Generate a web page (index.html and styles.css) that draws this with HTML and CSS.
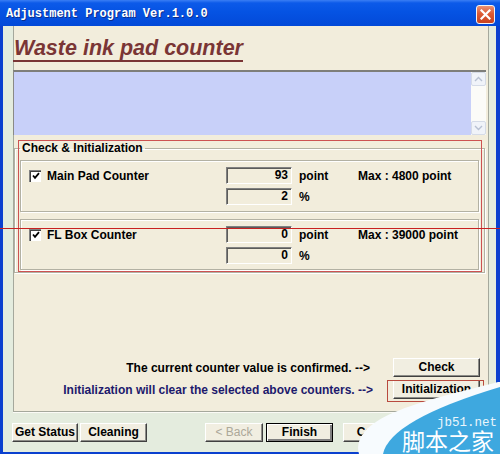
FILE: index.html
```html
<!DOCTYPE html>
<html>
<head>
<meta charset="utf-8">
<link rel="stylesheet" href="styles.css">
</head>
<body>
<div class="window">
  <div class="titlebar">
    <span class="title">Adjustment Program Ver.1.0.0</span>
    <span class="close"><svg width="11" height="11" viewBox="0 0 11 11"><path d="M1.5 1.5 L9.5 9.5 M9.5 1.5 L1.5 9.5" stroke="#fff" stroke-width="2.2" stroke-linecap="square"/></svg></span>
  </div>
  <div class="client">
    <div class="panel">
      <div class="header"><span class="heading">Waste ink pad counter</span></div>
      <div class="memo">
        <div class="memo-area"></div>
        <div class="scrollbar">
          <span class="sb-btn"><svg width="9" height="6" viewBox="0 0 9 6"><path d="M1 5 L4.5 1.5 L8 5" fill="none" stroke="#b7c0d2" stroke-width="1.4"/></svg></span>
          <span class="sb-btn"><svg width="9" height="6" viewBox="0 0 9 6"><path d="M1 1 L4.5 4.5 L8 1" fill="none" stroke="#b7c0d2" stroke-width="1.4"/></svg></span>
        </div>
      </div>
      <fieldset class="group">
        <legend class="legend">Check &amp; Initialization</legend>
        <div class="sub">
          <div class="row">
            <div class="lead"><span class="check"><svg width="8" height="8" viewBox="0 0 8 8"><path d="M1 3.5 L3 5.8 L7 1.2" fill="none" stroke="#000" stroke-width="1.8"/></svg></span><span>Main Pad Counter</span></div>
            <span class="field">93</span><span class="unit">point</span><span>Max : 4800 point</span>
          </div>
          <div class="row">
            <div class="lead"></div>
            <span class="field">2</span><span class="unit">%</span>
          </div>
        </div>
        <div class="sub sub2">
          <div class="row">
            <div class="lead"><span class="check"><svg width="8" height="8" viewBox="0 0 8 8"><path d="M1 3.5 L3 5.8 L7 1.2" fill="none" stroke="#000" stroke-width="1.8"/></svg></span><span>FL Box Counter</span></div>
            <span class="field">0</span><span class="unit">point</span><span>Max : 39000 point</span>
          </div>
          <div class="row">
            <div class="lead"></div>
            <span class="field">0</span><span class="unit">%</span>
          </div>
        </div>
      </fieldset>
      <div class="actions">
        <div class="action-row">
          <span class="note">The current counter value is confirmed. --&gt;</span>
          <button class="btn btn-action">Check</button>
        </div>
        <div class="action-row">
          <span class="note note-blue">Initialization will clear the selected above counters. --&gt;</span>
          <button class="btn btn-action">Initialization</button>
        </div>
      </div>
    </div>
    <div class="footer">
      <button class="btn b-status">Get Status</button>
      <button class="btn b-clean">Cleaning</button>
      <button class="btn b-back" disabled>&lt; Back</button>
      <button class="btn b-finish">Finish</button>
      <button class="btn b-cancel">Cancel</button>
    </div>
  </div>

  <div class="mark mark-group"></div>
  <div class="mark mark-init"></div>
  <div class="mark-line"></div>

  <div class="watermark">
    <svg width="160" height="84" viewBox="0 0 160 84">
      <path d="M19 84 C10 45 90 30 158 12 L160 12 L160 84 Z" fill="#f7fbfe"/>
      <path d="M43 84 Q50 50 160 17 L160 84 Z" fill="#3ea8df"/>
    </svg>
    <span class="wm-url">jb51.net</span>
    <span class="wm-cn">脚本之家</span>
  </div>
</div>
</body>
</html>
```
FILE: styles.css
```css
* { box-sizing: border-box; }
html, body { margin: 0; padding: 0; }
body {
  width: 500px;
  height: 454px;
  overflow: hidden;
  font-family: "Liberation Sans", Arial, sans-serif;
  font-size: 12px;
  font-weight: bold;
  color: #000;
}
.window {
  position: relative;
  width: 500px;
  height: 454px;
  background: #0a40cf;
  display: flex;
  flex-direction: column;
  overflow: hidden;
}
.titlebar {
  height: 26px;
  flex: none;
  display: flex;
  align-items: flex-start;
  justify-content: space-between;
  padding: 0 5px 0 6px;
  background: linear-gradient(#3a7ef4 0, #0c5ae9 3px, #0553e3 45%, #0349d8 100%);
}
.title {
  margin-top: 7px;
  font: bold 12px/14px "Liberation Mono", "DejaVu Sans Mono", monospace;
  color: #fff;
  text-shadow: 1px 1px 0 #0b2e8c;
}
.close {
  margin-top: 5px;
  width: 19px;
  height: 19px;
  border: 1px solid #f4f4f4;
  border-radius: 3px;
  background: linear-gradient(#eb9274, #dc5a34 45%, #c9431f);
  display: flex;
  align-items: center;
  justify-content: center;
}
.client {
  flex: none;
  height: 426px;
  margin: 0 4px 0 3px;
  background: #e4ecde;
  display: flex;
  flex-direction: column;
}
.panel {
  flex: none;
  margin-left: 10px;
  width: 476px;
  height: 386px;
  background: #f2eddc;
  border-left: 1px solid #a5a89c;
  border-right: 1px solid #a5a89c;
  border-bottom: 1px solid #a5a89c;
  box-shadow: 0 1px 0 #fbfbf6;
}
.header {
  height: 44px;
  padding-top: 11px;
}
.heading {
  display: inline-block;
  margin-left: -1px;
  padding-left: 1px;
  padding-bottom: 1px;
  font: italic bold 21.5px/22px "Liberation Sans", Arial, sans-serif;
  color: #7a3535;
  border-bottom: 2px solid #7a3535;
}
.memo {
  display: flex;
  margin-left: -1px;
  width: 473px;
  height: 65px;
  border-top: 2px solid #7e7e7a;
  border-left: 1px solid #8a8a86;
}
.memo-area {
  flex: 1;
  background: #c8d0f9;
}
.scrollbar {
  width: 15px;
  background: #fbfbf8;
  display: flex;
  flex-direction: column;
  justify-content: space-between;
}
.sb-btn {
  height: 14px;
  border: 1px solid #d5dbe7;
  border-radius: 2px;
  background: #f0f3f9;
  display: flex;
  align-items: center;
  justify-content: center;
}
.group {
  margin: 6px 0 0 0;
  width: 471px;
  padding: 0 5px 2px 5px;
  border: 1px solid #b3b1a3;
  box-shadow: inset 1px 1px 0 #fff, 1px 1px 0 #fff;
}
.legend {
  padding: 0 2px;
  font-size: 12px;
  line-height: 14px;
}
.sub {
  margin-top: 5px;
  width: 459px;
  height: 52px;
  padding-top: 6px;
  border: 1px solid #b3b1a3;
  box-shadow: inset 1px 1px 0 #fff, 1px 1px 0 #fff;
  display: flex;
  flex-direction: column;
  gap: 4px;
}
.sub2 {
  margin-top: 7px;
  height: 51px;
}
.row {
  display: flex;
  align-items: center;
  height: 17px;
  padding-left: 8px;
}
.lead {
  width: 197px;
  display: flex;
  align-items: center;
  gap: 6px;
}
.check {
  width: 12px;
  height: 12px;
  background: #fff;
  border-top: 1px solid #808080;
  border-left: 1px solid #808080;
  box-shadow: inset 1px 1px 0 #404040;
  display: flex;
  align-items: center;
  justify-content: center;
}
.field {
  width: 66px;
  height: 17px;
  line-height: 15px;
  text-align: right;
  padding-right: 3px;
  border-top: 1px solid #808080;
  border-left: 1px solid #808080;
  border-right: 1px solid #fff;
  border-bottom: 1px solid #fff;
  box-shadow: inset 1px 1px 0 #5c5c5a;
}
.unit {
  margin-left: 7px;
  width: 59px;
}
.actions {
  margin-top: 85px;
  padding-right: 8px;
  display: flex;
  flex-direction: column;
  gap: 3px;
}
.action-row {
  display: flex;
  justify-content: flex-end;
  align-items: center;
  height: 19px;
}
.note { margin-right: 23px; }
.note-blue { margin-right: 20px; color: #1d1a6c; }
.btn {
  font: bold 12px/15px "Liberation Sans", Arial, sans-serif;
  color: #000;
  height: 19px;
  padding: 0;
  background: #f1eee1;
  border: 1px solid;
  border-color: #fff #404040 #404040 #fff;
  box-shadow: inset -1px -1px 0 #8d8d88;
}
.btn-action { width: 87px; }
.footer {
  display: flex;
  padding-top: 11px;
  padding-left: 9px;
}
.b-status { width: 66px; }
.b-clean { width: 67px; margin-left: 2px; }
.b-back { width: 58px; margin-left: 58px; color: #aca899; font-weight: normal; }
.b-finish {
  width: 67px;
  margin-left: 3px;
  border: 1px solid #000;
  box-shadow: inset 1px 1px 0 #fff, inset -2px -2px 0 #808080;
}
.b-cancel { width: 67px; margin-left: 10px; }
.mark {
  position: absolute;
  border: 1px solid #cd5252;
}
.mark-group { left: 18px; top: 140px; width: 464px; height: 132px; }
.mark-init { left: 387px; top: 380px; width: 97px; height: 22px; border-color: #b94a3e; }
.mark-line {
  position: absolute;
  left: 0;
  top: 228px;
  width: 500px;
  height: 1px;
  background: #c82121;
}
.watermark {
  position: absolute;
  left: 340px;
  top: 370px;
  width: 160px;
  height: 84px;
}
.watermark svg { position: absolute; left: 0; top: 0; }
.wm-url {
  position: absolute;
  left: 97px;
  top: 46px;
  font: normal 12.5px/14px "Liberation Mono", "DejaVu Sans Mono", monospace;
  color: #eaf6fc;
}
.wm-cn {
  position: absolute;
  left: 62px;
  top: 57px;
  font: normal 23px/26px "Noto Sans CJK SC", sans-serif;
  color: #fff;
  white-space: nowrap;
}
```
